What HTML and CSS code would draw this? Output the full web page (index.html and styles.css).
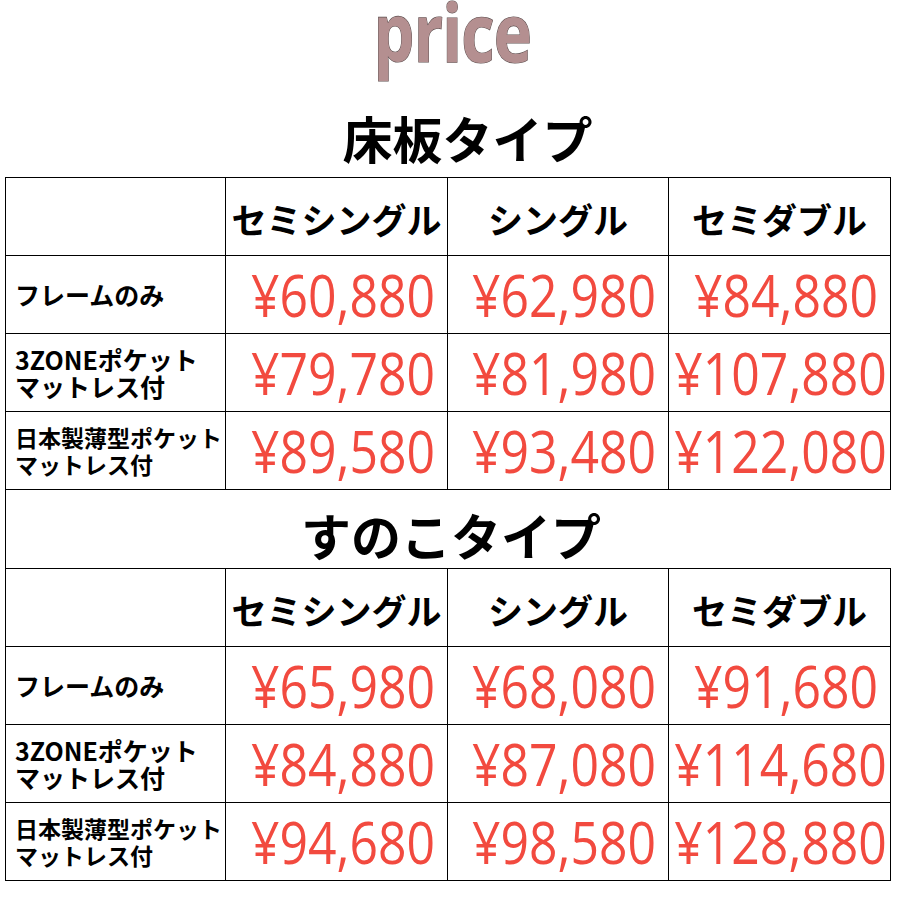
FILE: index.html
```html
<!DOCTYPE html>
<html lang="ja">
<head>
<meta charset="utf-8">
<title>price</title>
<link rel="stylesheet" href="styles.css">
</head>
<body>
<div class="page">
  <div class="brand"><span class="brand-text">price</span></div>
  <h2 class="section-title first">床板タイプ</h2>
  <table class="price-table">
    <colgroup><col class="c-label"><col class="c-1"><col class="c-2"><col class="c-3"></colgroup>
    <tr>
      <td></td>
      <th>セミシングル</th>
      <th>シングル</th>
      <th>セミダブル</th>
    </tr>
    <tr>
      <td class="label lg"><span class="ln">フレームのみ</span></td>
      <td><div class="price"><span>¥60,880</span></div></td>
      <td><div class="price"><span>¥62,980</span></div></td>
      <td><div class="price"><span>¥84,880</span></div></td>
    </tr>
    <tr>
      <td class="label lg"><span class="ln">3ZONEポケット</span><span class="ln">マットレス付</span></td>
      <td><div class="price"><span>¥79,780</span></div></td>
      <td><div class="price"><span>¥81,980</span></div></td>
      <td><div class="price long"><span>¥107,880</span></div></td>
    </tr>
    <tr>
      <td class="label"><span class="ln">日本製薄型ポケット</span><span class="ln">マットレス付</span></td>
      <td><div class="price"><span>¥89,580</span></div></td>
      <td><div class="price"><span>¥93,480</span></div></td>
      <td><div class="price long"><span>¥122,080</span></div></td>
    </tr>
  </table>
  <h2 class="section-title second">すのこタイプ</h2>
  <table class="price-table">
    <colgroup><col class="c-label"><col class="c-1"><col class="c-2"><col class="c-3"></colgroup>
    <tr>
      <td></td>
      <th>セミシングル</th>
      <th>シングル</th>
      <th>セミダブル</th>
    </tr>
    <tr>
      <td class="label lg"><span class="ln">フレームのみ</span></td>
      <td><div class="price"><span>¥65,980</span></div></td>
      <td><div class="price"><span>¥68,080</span></div></td>
      <td><div class="price"><span>¥91,680</span></div></td>
    </tr>
    <tr>
      <td class="label lg"><span class="ln">3ZONEポケット</span><span class="ln">マットレス付</span></td>
      <td><div class="price"><span>¥84,880</span></div></td>
      <td><div class="price"><span>¥87,080</span></div></td>
      <td><div class="price long"><span>¥114,680</span></div></td>
    </tr>
    <tr>
      <td class="label"><span class="ln">日本製薄型ポケット</span><span class="ln">マットレス付</span></td>
      <td><div class="price"><span>¥94,680</span></div></td>
      <td><div class="price"><span>¥98,580</span></div></td>
      <td><div class="price long"><span>¥128,880</span></div></td>
    </tr>
  </table>
</div>
</body>
</html>
```
FILE: styles.css
```css
* { box-sizing: border-box; }
html, body { margin: 0; padding: 0; background: #fff; }
body {
  font-family: "Noto Sans CJK JP", "Noto Sans", sans-serif;
  color: #000;
}
.page {
  width: 900px;
  padding-left: 5px;
}
.brand {
  height: 100px;
  display: flex;
  justify-content: center;
  align-items: flex-start;
  overflow: visible;
}
.brand-text {
  display: inline-block;
  font-family: "Open Sans", "Noto Sans", sans-serif;
  font-weight: 700;
  font-size: 80px;
  line-height: 100px;
  margin-top: -19px;
  color: #b48f90;
  -webkit-text-stroke: 1.2px #5e5050;
  paint-order: stroke fill;
  transform: scaleX(0.81);
  letter-spacing: -1px;
}
.section-title {
  margin: 0;
  font-weight: 700;
  font-size: 50px;
  text-align: center;
  display: flex;
  align-items: center;
  justify-content: center;
}
.section-title.first {
  height: 77px;
  padding-left: 30px;
  padding-bottom: 4px;
}
.section-title.second {
  height: 78px;
  width: 885px;
  border-left: 1px solid #000;
  padding-top: 10px;
  padding-left: 6px;
}
.price-table {
  border-collapse: collapse;
  table-layout: fixed;
  width: 885px;
}
.c-label { width: 220px; }
.c-1 { width: 222px; }
.c-2 { width: 221px; }
.c-3 { width: 222px; }
.price-table tr { height: 78px; }
.price-table td, .price-table th {
  border: 1px solid #000;
  padding: 0;
  vertical-align: middle;
}
.price-table th {
  font-weight: 700;
  font-size: 35px;
  text-align: center;
  white-space: nowrap;
  padding-top: 4px;
}
.label {
  font-weight: 700;
  font-size: 23px;
  padding-left: 9px !important;
  white-space: nowrap;
}
.label.lg { font-size: 25px; }
.ln {
  display: block;
  height: 27px;
  line-height: 27px;
}
.price {
  display: flex;
  justify-content: center;
  padding-left: 12px;
}
.price.long { padding-left: 2px; }
.price span {
  display: inline-block;
  font-family: "Open Sans", "Noto Sans", sans-serif;
  font-size: 58px;
  line-height: 70px;
  color: #f24a3f;
  transform: scaleX(0.86);
  white-space: nowrap;
}
```
